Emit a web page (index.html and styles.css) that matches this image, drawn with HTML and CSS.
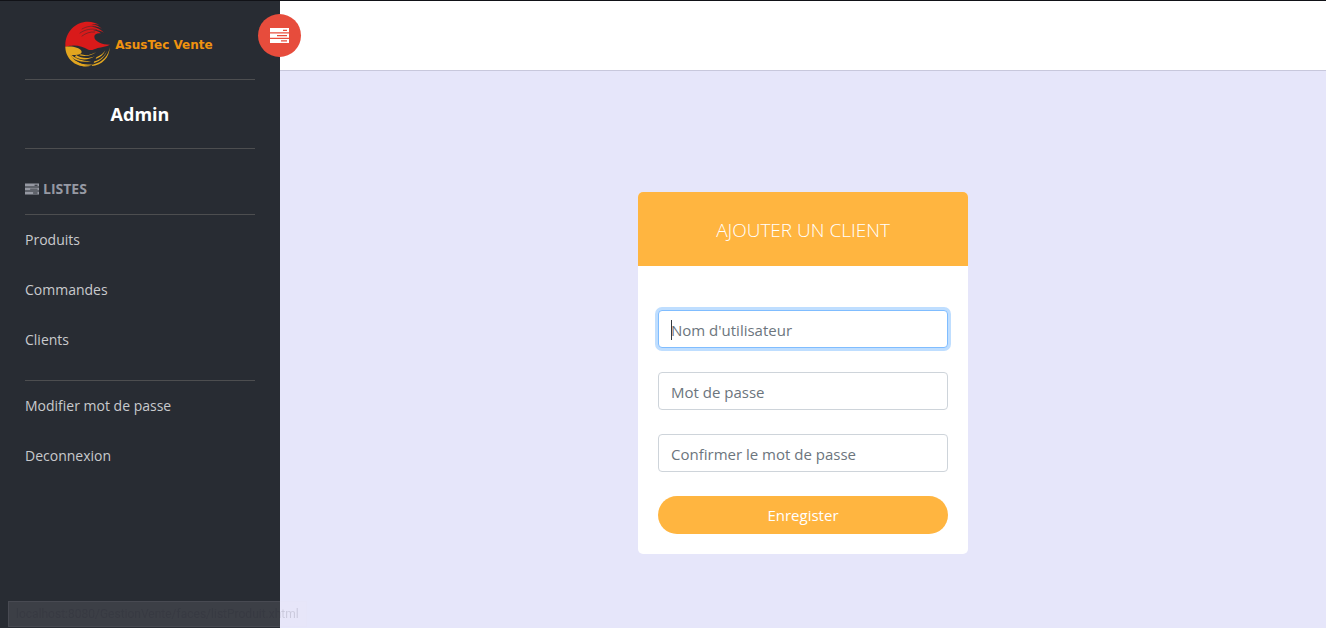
FILE: index.html
```html
<!DOCTYPE html>
<html lang="fr">
<head>
<meta charset="utf-8">
<meta name="viewport" content="width=device-width, initial-scale=1">
<title>AsusTec Vente - Ajouter un client</title>
<link rel="stylesheet" href="styles.css">
</head>
<body>
<svg class="sprite" aria-hidden="true">
  <symbol id="server" viewBox="0 0 19 15">
    <path fill="currentColor" fill-rule="evenodd" d="M0 0h19v4.200H0zM13 1.800v1.200h4v-1.200zM0 5.500h19v4.200H0zM7 7v1.200h10V7zM0 10.900h19v4.100H0zM11 12.300v1.200h6v-1.200z"/>
  </symbol>
</svg>
<div class="page">
  <aside class="sidebar">
    <button class="toggle" type="button" aria-label="Menu"><svg class="toggle-icon"><use href="#server"/></svg></button>
    <a class="brand" href="#">
      <svg class="brand-mark" viewBox="3 3 138 138" aria-hidden="true">
        <path fill="#d91a1a" d="M4 76C4 36 34 5 72 5c13 0 25 4 34 10-9-3-16-4-24-3 14 2 25 7 32 15-10-6-20-8-30-7 14 2 27 8 36 18-12-7-23-9-33-7 10 1 17 4 24 9-11-2-20 2-20 10 0 14 23 24 47 24-11 6-25 7-37 10-9 3-18 9-28 5-15-7-30-14-50-12-8 0-15 1-19 6z"/>
        <path fill="none" stroke="#282c33" stroke-width="1.500" stroke-linecap="round" d="M54 27c14-8 28-10 42-7M48 39c16-11 34-14 50-10M54 48c12-9 24-13 38-12"/>
        <path fill="#e2a61f" d="M4 80c20-3 42 2 48 12 3 7-2 11-12 12-9 1-16 0-20 3 15 20 38 30 62 30-37 10-78-15-78-57z"/>
        <path fill="#e2a61f" d="M18 102c20 16 40 22 63 21-23 6-44 1-58-11zM36 105c17 11 37 12 57 3-18 13-42 13-60 3zM50 103c16 5 32 2 47-7-15 12-34 15-51 10zM35 123c18 11 36 13 55 8-17 8-36 8-53-4zM86 134c30-7 48-27 51-53 0 31-22 55-55 57zM91 124c18-5 32-17 38-32-6 18-20 31-40 37zM97 112c13-5 22-12 27-21-5 13-15 22-29 26z"/>
      </svg>
      <span class="brand-name">AsusTec Vente</span>
    </a>
    <h1 class="role">Admin</h1>
    <h2 class="menu-title"><svg class="menu-icon" aria-hidden="true"><use href="#server"/></svg>LISTES</h2>
    <nav>
      <ul class="menu">
        <li><a href="#">Produits</a></li>
        <li><a href="#">Commandes</a></li>
        <li><a href="#">Clients</a></li>
      </ul>
      <ul class="menu account">
        <li><a href="#">Modifier mot de passe</a></li>
        <li><a href="#">Deconnexion</a></li>
      </ul>
    </nav>
  </aside>
  <div class="content">
    <header class="topbar"></header>
    <main class="main">
      <form class="card">
        <h2 class="card-title">AJOUTER UN CLIENT</h2>
        <div class="card-body">
          <div class="field active">
            <input class="input" type="text" placeholder="Nom d'utilisateur" aria-label="Nom d'utilisateur">
            <span class="caret"></span>
          </div>
          <div class="field"><input class="input" type="password" placeholder="Mot de passe" aria-label="Mot de passe"></div>
          <div class="field"><input class="input" type="password" placeholder="Confirmer le mot de passe" aria-label="Confirmer le mot de passe"></div>
          <button class="submit" type="submit">Enregister</button>
        </div>
      </form>
    </main>
  </div>
</div>
<div class="status">localhost:8080/GestionVente/faces/listProduit.xhtml</div>
</body>
</html>
```
FILE: styles.css
```css
* { box-sizing: border-box; }
body {
  margin: 0;
  font-family: "Open Sans", "Noto Sans", sans-serif;
  font-size: 14px;
}
h1, h2, ul { margin: 0; padding: 0; }
a { color: inherit; text-decoration: none; }
.sprite { position: absolute; width: 0; height: 0; }
.page {
  display: flex;
  min-height: 100vh;
  border-top: 1px solid #111217;
}
.sidebar {
  position: relative;
  flex: 0 0 280px;
  padding: 0 25px;
  background: #282c33;
  color: #c8cacd;
}
.toggle {
  position: absolute;
  top: 13px;
  right: -21px;
  display: flex;
  align-items: center;
  justify-content: center;
  width: 43px;
  height: 43px;
  padding: 0;
  border: 0;
  border-radius: 50%;
  background: #e74c3c;
  color: #fff;
}
.toggle-icon { width: 19px; height: 15px; }
.brand {
  display: flex;
  align-items: center;
  justify-content: center;
  gap: 4px;
  padding: 20px 2px 12px 0;
  border-bottom: 1px solid #4d4e50;
}
.brand-mark { width: 46px; height: 46px; }
.brand-name {
  padding-top: 2px;
  color: #f0930f;
  font: bold 12px/16px "DejaVu Sans", sans-serif;
}
.role {
  padding: 22px 0;
  border-bottom: 1px solid #4d4e50;
  color: #fff;
  font-size: 18px;
  line-height: 24px;
  text-align: center;
}
.menu-title {
  display: flex;
  align-items: center;
  gap: 4px;
  padding: 30px 0 15px;
  border-bottom: 1px solid #4d4e50;
  color: #9699a3;
  font-size: 14px;
  line-height: 20px;
}
.menu-icon { width: 14px; height: 12px; }
.menu { list-style: none; }
.menu a {
  display: block;
  padding: 15px 0;
  line-height: 20px;
}
.account {
  margin-top: 15px;
  border-top: 1px solid #4d4e50;
}
.content {
  display: flex;
  flex: 1;
  flex-direction: column;
}
.topbar {
  height: 70px;
  border-bottom: 1px solid #c8c8dc;
  background: #fff;
}
.main {
  display: flex;
  flex: 1;
  align-items: flex-start;
  justify-content: center;
  padding: 121px 20px 40px;
  background: #e6e6fa;
}
.card {
  width: 330px;
  border-radius: 5px;
  overflow: hidden;
  background: #fff;
}
.card-title {
  padding: 25px 20px 23px;
  background: #ffb540;
  color: #fff;
  font-size: 19px;
  font-weight: 300;
  line-height: 26px;
  text-align: center;
}
.card-body {
  display: flex;
  flex-direction: column;
  gap: 24px;
  padding: 44px 20px 20px;
}
.field { position: relative; display: flex; }
.input {
  width: 100%;
  height: 38px;
  padding: 2px 12px 0;
  border: 1px solid #ced4da;
  border-radius: 4px;
  outline: 0;
  background: #fff;
  color: #495057;
  font: 15px "Open Sans", "Noto Sans", sans-serif;
}
.input::placeholder { color: #6c757d; opacity: 1; }
.active .input,
.input:focus {
  border-color: #80bdff;
  box-shadow: 0 0 0 3px #bfdeff;
}
.caret {
  position: absolute;
  top: 10px;
  left: 13px;
  width: 1px;
  height: 20px;
  background: #343a40;
}
.submit {
  height: 38px;
  padding: 0 12px;
  border: 0;
  border-radius: 19px;
  background: #ffb540;
  color: #fff;
  font: 15px "Open Sans", "Noto Sans", sans-serif;
}
.status {
  position: fixed;
  bottom: 1px;
  left: 8px;
  padding: 3px 7px;
  border: 1px solid rgba(200, 200, 215, 0.08);
  background: rgba(245, 240, 250, 0.1);
  color: rgba(30, 30, 45, 0.14);
  font: 12px/18px Roboto, sans-serif;
}
```
